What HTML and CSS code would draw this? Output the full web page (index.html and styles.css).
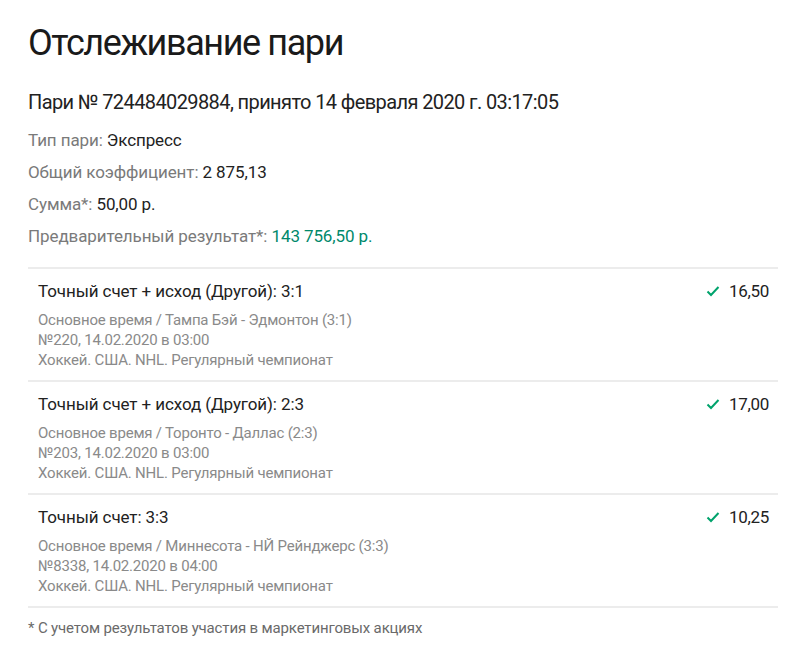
FILE: index.html
```html
<!DOCTYPE html>
<html lang="ru">
<head>
<meta charset="utf-8">
<title>Отслеживание пари</title>
<link rel="stylesheet" href="styles.css">
</head>
<body>
<main class="page">
  <h1 class="title">Отслеживание пари</h1>
  <p class="bet-head">Пари № 724484029884, принято 14 февраля 2020 г. 03:17:05</p>
  <ul class="info">
    <li><span class="label">Тип пари:</span> <span class="value">Экспресс</span></li>
    <li><span class="label">Общий коэффициент:</span> <span class="value">2 875,13</span></li>
    <li><span class="label">Сумма*:</span> <span class="value">50,00 р.</span></li>
    <li><span class="label">Предварительный результат*:</span> <span class="value win">143 756,50 р.</span></li>
  </ul>
  <div class="events">
    <div class="event">
      <div class="event-main">
        <div class="event-title">Точный счет + исход (Другой): 3:1</div>
        <div class="event-sub">Основное время / Тампа Бэй - Эдмонтон (3:1)</div>
        <div class="event-sub">№220, 14.02.2020 в 03:00</div>
        <div class="event-sub">Хоккей. США. NHL. Регулярный чемпионат</div>
      </div>
      <div class="event-odds"><svg class="check" viewBox="0 0 14 12" width="14" height="12"><path d="M1.5 6.5 L5 10 L12.5 2" fill="none" stroke="#00a36c" stroke-width="2"/></svg><span>16,50</span></div>
    </div>
    <div class="event">
      <div class="event-main">
        <div class="event-title">Точный счет + исход (Другой): 2:3</div>
        <div class="event-sub">Основное время / Торонто - Даллас (2:3)</div>
        <div class="event-sub">№203, 14.02.2020 в 03:00</div>
        <div class="event-sub">Хоккей. США. NHL. Регулярный чемпионат</div>
      </div>
      <div class="event-odds"><svg class="check" viewBox="0 0 14 12" width="14" height="12"><path d="M1.5 6.5 L5 10 L12.5 2" fill="none" stroke="#00a36c" stroke-width="2"/></svg><span>17,00</span></div>
    </div>
    <div class="event">
      <div class="event-main">
        <div class="event-title">Точный счет: 3:3</div>
        <div class="event-sub">Основное время / Миннесота - НЙ Рейнджерс (3:3)</div>
        <div class="event-sub">№8338, 14.02.2020 в 04:00</div>
        <div class="event-sub">Хоккей. США. NHL. Регулярный чемпионат</div>
      </div>
      <div class="event-odds"><svg class="check" viewBox="0 0 14 12" width="14" height="12"><path d="M1.5 6.5 L5 10 L12.5 2" fill="none" stroke="#00a36c" stroke-width="2"/></svg><span>10,25</span></div>
    </div>
  </div>
  <p class="note">* С учетом результатов участия в маркетинговых акциях</p>
</main>
</body>
</html>
```
FILE: styles.css
```css
html, body {
  margin: 0;
  padding: 0;
  background: #ffffff;
}
body {
  font-family: Roboto, "Liberation Sans", sans-serif;
  color: #222222;
}
.page {
  padding: 18px 22px 0 28px;
}
.title {
  margin: 0;
  font-size: 36px;
  font-weight: 400;
  line-height: 50px;
  letter-spacing: -1.4px;
  color: #1a1a1a;
}
.bet-head {
  margin: 20px 0 0;
  font-size: 20px;
  line-height: 28px;
  letter-spacing: -0.6px;
  color: #222222;
}
.info {
  list-style: none;
  margin: 8px 0 0;
  padding: 0;
}
.info li {
  font-size: 17px;
  line-height: 32px;
  letter-spacing: -0.1px;
}
.label {
  color: #7a7a7a;
}
.value {
  color: #222222;
}
.value.win {
  color: #00896b;
}
.events {
  margin-top: 15px;
  border-top: 2px solid #ececec;
}
.event {
  display: flex;
  justify-content: space-between;
  align-items: flex-start;
  padding: 10px 9px 10px 10px;
  border-bottom: 2px solid #ececec;
}
.event-title {
  font-size: 17px;
  line-height: 24px;
  letter-spacing: -0.1px;
  color: #222222;
  margin-bottom: 7px;
}
.event-sub {
  font-size: 15px;
  line-height: 20px;
  letter-spacing: -0.2px;
  color: #8a8a8a;
}
.event-odds {
  display: flex;
  align-items: center;
  gap: 9px;
  font-size: 17px;
  line-height: 24px;
  letter-spacing: -0.3px;
  color: #222222;
}
.check {
  display: block;
}
.note {
  margin: 10px 0 0;
  font-size: 15px;
  line-height: 20px;
  letter-spacing: -0.15px;
  color: #6a6a6a;
}
```
